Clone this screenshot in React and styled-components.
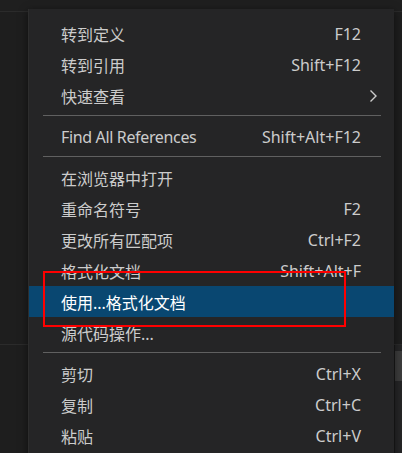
import React from "react";
import styled, { createGlobalStyle } from "styled-components";

const GlobalStyle = createGlobalStyle`
  html, body {
    margin: 0;
    padding: 0;
    background: #1e1e1e;
  }
  #root {
    width: 402px;
    height: 453px;
    overflow: hidden;
  }
`;

const Workbench = styled.div`
  position: relative;
  width: 402px;
  height: 453px;
  display: flex;
  flex-direction: column;
  background: #1e1e1e;
  font-family: "Noto Sans", "Noto Sans CJK SC", sans-serif;
`;

const TabStrip = styled.div`
  height: 11px;
  background: #1f1f1f;
  border-bottom: 1px solid #2b2b2b;
  flex: none;
`;

const Editor = styled.div`
  height: 332px;
  flex: none;
`;

const Panel = styled.div`
  flex: 1;
  display: flex;
  border-top: 1px solid #2b2b2b;
`;

const PanelBody = styled.div`
  flex: 1;
`;

const ScrollTrack = styled.div`
  width: 7px;
  padding-top: 6px;
  border-left: 1px solid #1a1a1a;
  background: #252526;
`;

const Slider = styled.div`
  height: 30px;
  background: #3c3c3c;
`;

const Menu = styled.div`
  position: absolute;
  left: 28px;
  top: 9px;
  width: 366px;
  padding: 9px 0;
  background: #252526;
  box-shadow: 0 2px 8px rgba(0, 0, 0, 0.55);
  border-left: 1px solid #2d2d2d;
  box-sizing: border-box;
`;

const Row = styled.div`
  display: flex;
  align-items: center;
  height: 31px;
  padding-left: 32px;
  font-size: 16px;
  color: ${(p) => (p.$active ? "#ffffff" : "#cccccc")};
  background: ${(p) => (p.$active ? "#094771" : "transparent")};
`;

const Label = styled.span`
  flex: 1;
  white-space: nowrap;
  letter-spacing: ${(p) => (p.$latin ? "-0.35px" : "0")};
`;

const Keys = styled.span`
  white-space: nowrap;
`;

const Indicator = styled.span`
  width: 33px;
  display: flex;
  align-items: center;
  padding-left: 8px;
  box-sizing: border-box;
`;

const Separator = styled.div`
  height: 1px;
  margin: 4px 13px 5px 14px;
  background: #606060;
`;

const Highlight = styled.div`
  position: absolute;
  left: 43px;
  top: 271px;
  width: 303px;
  height: 56px;
  border: 2px solid #ff0000;
  box-sizing: border-box;
  pointer-events: none;
`;

const Chevron = () => (
  <svg width="9" height="14" viewBox="0 0 9 14">
    <path d="M1.5 1.5 L7 7 L1.5 12.5" fill="none" stroke="#cccccc" strokeWidth="1.4" />
  </svg>
);

const groups = [
  [
    { label: "转到定义", keys: "F12" },
    { label: "转到引用", keys: "Shift+F12" },
    { label: "快速查看", sub: true },
  ],
  [{ label: "Find All References", keys: "Shift+Alt+F12", latin: true }],
  [
    { label: "在浏览器中打开" },
    { label: "重命名符号", keys: "F2" },
    { label: "更改所有匹配项", keys: "Ctrl+F2" },
    { label: "格式化文档", keys: "Shift+Alt+F" },
    { label: "使用...格式化文档", active: true },
    { label: "源代码操作..." },
  ],
  [
    { label: "剪切", keys: "Ctrl+X" },
    { label: "复制", keys: "Ctrl+C" },
    { label: "粘贴", keys: "Ctrl+V" },
  ],
];

const App = () => {
  return (
    <>
      <GlobalStyle />
      <Workbench>
        <TabStrip />
        <Editor />
        <Panel>
          <PanelBody />
          <ScrollTrack>
            <Slider />
          </ScrollTrack>
        </Panel>
        <Menu>
          {groups.map((items, gi) => (
            <React.Fragment key={gi}>
              {gi > 0 && <Separator />}
              {items.map((it) => (
                <Row key={it.label} $active={it.active}>
                  <Label $latin={it.latin}>{it.label}</Label>
                  <Keys>{it.keys}</Keys>
                  <Indicator>{it.sub && <Chevron />}</Indicator>
                </Row>
              ))}
            </React.Fragment>
          ))}
        </Menu>
        <Highlight />
      </Workbench>
    </>
  );
};

export default App;
